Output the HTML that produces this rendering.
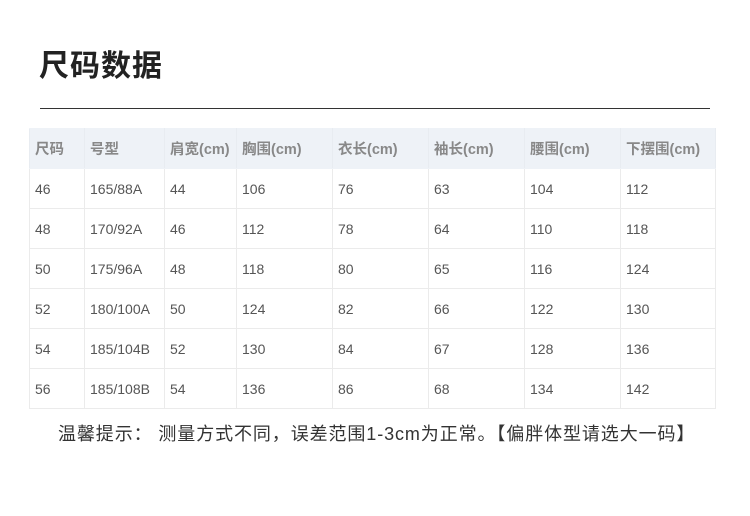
<!DOCTYPE html>
<html><head><meta charset="utf-8"><style>
body{margin:0;width:750px;height:516px;background:#fff;font-family:"Liberation Sans","Noto Sans CJK SC",sans-serif;position:relative;overflow:hidden}
h1{position:absolute;left:39px;top:47px;margin:0;font-size:30px;font-weight:bold;color:#222;letter-spacing:1px;line-height:40px}
.line{position:absolute;left:40px;top:108px;width:670px;height:1px;background:#333}
table{position:absolute;left:29px;top:128px;border-collapse:collapse;font-size:14px;color:#555}
td{height:40px;border:1px solid #ebebeb;padding:0 0 0 5px;vertical-align:middle;box-sizing:border-box}
tr:first-child td{background:#eef2f7;color:#888;font-weight:bold;font-size:14.5px;height:40px;border-color:#eef2f7 #e8ecf1}
.foot{position:absolute;left:58px;top:420px;font-size:18px;letter-spacing:0.9px;color:#333;white-space:nowrap}
</style></head><body>
<h1>尺码数据</h1>
<div class="line"></div>
<table>
<colgroup><col style="width:55px"><col style="width:80px"><col style="width:72px"><col style="width:96px"><col style="width:96px"><col style="width:96px"><col style="width:96px"><col style="width:95px"></colgroup>
<tr><td>尺码</td><td>号型</td><td>肩宽(cm)</td><td>胸围(cm)</td><td>衣长(cm)</td><td>袖长(cm)</td><td>腰围(cm)</td><td>下摆围(cm)</td></tr>
<tr><td>46</td><td>165/88A</td><td>44</td><td>106</td><td>76</td><td>63</td><td>104</td><td>112</td></tr>
<tr><td>48</td><td>170/92A</td><td>46</td><td>112</td><td>78</td><td>64</td><td>110</td><td>118</td></tr>
<tr><td>50</td><td>175/96A</td><td>48</td><td>118</td><td>80</td><td>65</td><td>116</td><td>124</td></tr>
<tr><td>52</td><td>180/100A</td><td>50</td><td>124</td><td>82</td><td>66</td><td>122</td><td>130</td></tr>
<tr><td>54</td><td>185/104B</td><td>52</td><td>130</td><td>84</td><td>67</td><td>128</td><td>136</td></tr>
<tr><td>56</td><td>185/108B</td><td>54</td><td>136</td><td>86</td><td>68</td><td>134</td><td>142</td></tr>
</table>
<div class="foot">温馨提示： 测量方式不同，误差范围1-3cm为正常。【偏胖体型请选大一码】</div>
</body></html>
